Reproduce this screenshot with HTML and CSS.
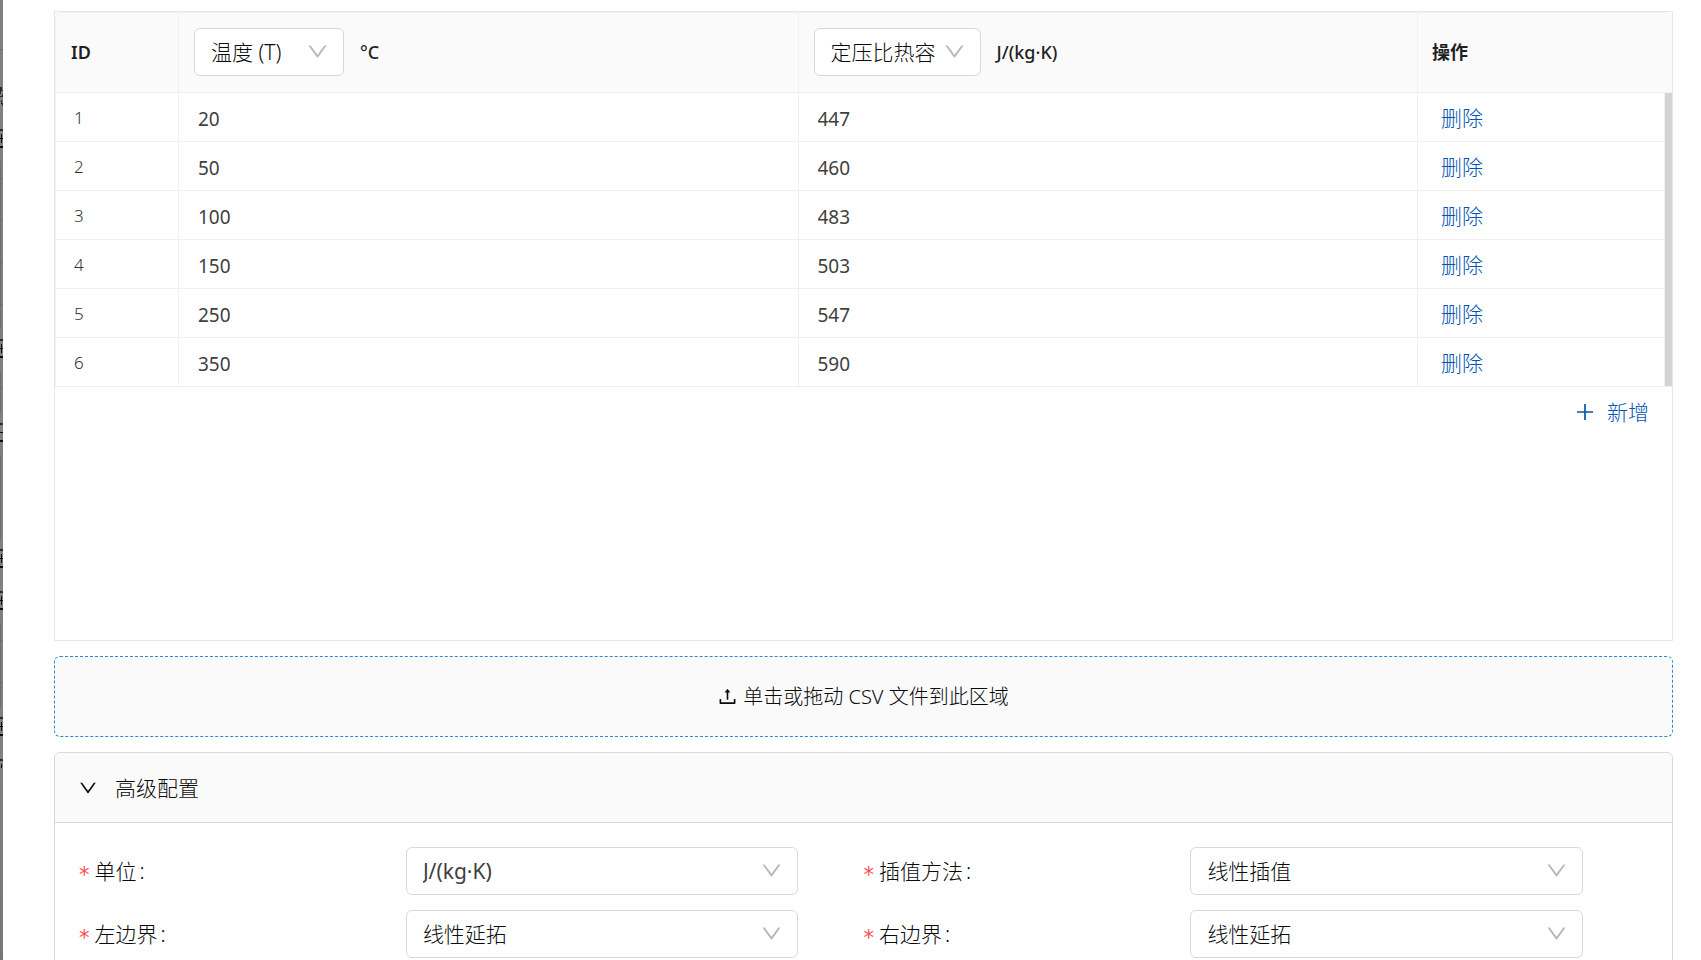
FILE: index.html
```
<!DOCTYPE html>
<html lang="zh-CN">
<head>
<meta charset="utf-8">
<title>定压比热容</title>
<link rel="stylesheet" href="styles.css">
</head>
<body>
<svg width="0" height="0" class="sprite" aria-hidden="true">
  <symbol id="down" viewBox="64 64 896 896"><path d="M884 256h-75c-5.100 0-9.900 2.500-12.900 6.600L512 654.200 227.900 262.600c-3-4.100-7.800-6.600-12.900-6.600h-75c-6.500 0-10.300 7.400-6.500 12.700l352.600 486.100c12.800 17.600 39 17.600 51.700 0l352.600-486.100c3.900-5.300.1-12.700-6.400-12.700z"/></symbol>
  <symbol id="plus" viewBox="64 64 896 896"><path d="M482 152h60q8 0 8 8v704q0 8-8 8h-60q-8 0-8-8V160q0-8 8-8Z"/><path d="M192 474h672q8 0 8 8v60q0 8-8 8H160q-8 0-8-8v-60q0-8 8-8Z"/></symbol>
  <symbol id="upload" viewBox="64 64 896 896"><path d="M400 317.700h73.900V656c0 4.400 3.600 8 8 8h60c4.400 0 8-3.600 8-8V317.700H624c6.700 0 10.400-7.700 6.300-12.900L518.300 163a8 8 0 00-12.600 0l-112 141.700c-4.100 5.300-.4 13 6.300 13zM878 626h-60c-4.400 0-8 3.600-8 8v154H214V634c0-4.400-3.600-8-8-8h-60c-4.400 0-8 3.600-8 8v198c0 17.700 14.300 32 32 32h684c17.700 0 32-14.300 32-32V634c0-4.400-3.600-8-8-8z"/></symbol>
</svg>

<div class="mask" aria-hidden="true">
  <svg width="3" height="960" viewBox="0 0 3 960" shape-rendering="crispEdges">
    <g fill="#6e6e6e">
      <path d="M0 49h3v1H0zM0 161h1v168H0zM1 178h2v1H1zM1 220h2v1H1zM1 262h2v1H1zM1 304h2v1H1zM0 371h1v42H0zM1 388h2v1H1zM0 455h1v84H0zM0 623h1v84H0zM1 640h2v1H1zM1 682h2v1H1z"/>
    </g>
    <g fill="#2c2c2e">
      <path d="M0 87h2v3H0zM0 90h3v1H0zM0 91h1v3H0zM2 94h1v3H2zM0 96h2v1H0zM1 100h1v4H1zM2 103h1v3H2z"/>
      <path d="M0 129h3v2H0zM0 339h3v2H0zM0 423h3v2H0zM0 549h3v2H0zM0 591h3v2H0zM0 717h3v2H0zM0 759h3v2H0z"/>
    </g>
    <g fill="#0c0c0e">
      <path d="M0 138h3v1H0zM1 134h1v9H1zM0 146h3v2H0z"/>
      <path d="M0 348h3v1H0zM1 344h1v9H1zM0 356h3v2H0z"/>
      <path d="M0 432h3v1H0zM0 440h3v2H0z"/>
      <path d="M0 558h3v1H0zM1 554h1v9H1zM0 566h3v2H0z"/>
      <path d="M0 600h3v1H0zM1 596h1v9H1zM0 608h3v2H0z"/>
      <path d="M0 726h3v1H0zM1 722h1v9H1zM0 734h3v2H0z"/>
      <path d="M1 764h1v4H1z"/>
    </g>
  </svg>
</div>

<main class="drawer">
  <section class="table-box">
    <div class="table-wrap">
      <table class="data">
        <colgroup><col class="col-id"><col><col><col class="col-action"></colgroup>
        <thead>
          <tr>
            <th scope="col">ID</th>
            <th scope="col">
              <div class="head-cell">
                <span class="select head-temp"><select aria-label="变量"><option>温度 (T)</option></select><svg class="arrow"><use href="#down"/></svg></span>
                <span>°C</span>
              </div>
            </th>
            <th scope="col">
              <div class="head-cell">
                <span class="select head-prop"><select aria-label="属性"><option>定压比热容</option></select><svg class="arrow"><use href="#down"/></svg></span>
                <span>J/(kg·K)</span>
              </div>
            </th>
            <th scope="col">操作</th>
          </tr>
        </thead>
        <tbody>
          <tr><td class="id">1</td><td><input aria-label="温度 1" value="20"></td><td><input aria-label="比热容 1" value="447"></td><td><button class="link" type="button">删除</button></td></tr>
          <tr><td class="id">2</td><td><input aria-label="温度 2" value="50"></td><td><input aria-label="比热容 2" value="460"></td><td><button class="link" type="button">删除</button></td></tr>
          <tr><td class="id">3</td><td><input aria-label="温度 3" value="100"></td><td><input aria-label="比热容 3" value="483"></td><td><button class="link" type="button">删除</button></td></tr>
          <tr><td class="id">4</td><td><input aria-label="温度 4" value="150"></td><td><input aria-label="比热容 4" value="503"></td><td><button class="link" type="button">删除</button></td></tr>
          <tr><td class="id">5</td><td><input aria-label="温度 5" value="250"></td><td><input aria-label="比热容 5" value="547"></td><td><button class="link" type="button">删除</button></td></tr>
          <tr><td class="id">6</td><td><input aria-label="温度 6" value="350"></td><td><input aria-label="比热容 6" value="590"></td><td><button class="link" type="button">删除</button></td></tr>
        </tbody>
      </table>
      <div class="scrollbar"></div>
    </div>
    <div class="add-row">
      <button class="link add" type="button"><svg class="icon"><use href="#plus"/></svg>新增</button>
    </div>
  </section>

  <button class="dropzone" type="button"><svg class="icon"><use href="#upload"/></svg><span>单击或拖动 CSV 文件到此区域</span></button>

  <section class="panel">
    <h2 class="panel-title"><button class="panel-toggle" type="button" aria-expanded="true"><svg class="icon"><use href="#down"/></svg>高级配置</button></h2>
    <form class="form">
      <div class="field">
        <label for="unit">单位</label>
        <span class="select unit"><select id="unit"><option>J/(kg·K)</option></select><svg class="arrow"><use href="#down"/></svg></span>
      </div>
      <div class="field">
        <label for="method">插值方法</label>
        <span class="select"><select id="method"><option>线性插值</option></select><svg class="arrow"><use href="#down"/></svg></span>
      </div>
      <div class="field">
        <label for="left">左边界</label>
        <span class="select"><select id="left"><option>线性延拓</option></select><svg class="arrow"><use href="#down"/></svg></span>
      </div>
      <div class="field">
        <label for="right">右边界</label>
        <span class="select"><select id="right"><option>线性延拓</option></select><svg class="arrow"><use href="#down"/></svg></span>
      </div>
    </form>
  </section>
</main>
</body>
</html>
```
FILE: styles.css
```
* {
  box-sizing: border-box;
}

body {
  display: flex;
  height: 100vh;
  margin: 0;
  overflow: hidden;
  background: #fff;
  color: #0a0a0a;
  font-family: "Noto Sans", "Noto Sans CJK SC", sans-serif;
  font-size: 21px;
  font-weight: 300;
  line-height: 32px;
}

button,
input,
select {
  margin: 0;
  border: 0;
  background: none;
  color: inherit;
  font: inherit;
}

.sprite {
  position: absolute;
}

.icon {
  flex: none;
  width: 20px;
  height: 20px;
  fill: currentColor;
}

.mask {
  flex: 0 0 3px;
  overflow: hidden;
  background: linear-gradient(#808080 80%, #77777a);
}

.mask svg {
  display: block;
}

.drawer {
  flex: 1;
  min-width: 0;
  padding: 11px 28px 0 51px;
}

/* Data table */
.table-box {
  min-height: 630px;
  border: 1px solid #e5e8eb;
}

.table-wrap {
  position: relative;
}

.data {
  width: 100%;
  table-layout: fixed;
  border-collapse: separate;
  border-spacing: 0;
  border: 1px solid #f0f0f0;
  border-width: 1px 0 0 1px;
  border-radius: 6px 6px 0 0;
}

.col-id {
  width: 123px;
}

.col-action {
  width: 254px;
}

.data th,
.data td {
  border: 1px solid #f0f0f0;
  border-width: 0 1px 1px 0;
}

.data th {
  height: 80px;
  padding: 0 15px 2px;
  background: #fafafa;
  color: #1f1f1f;
  font-size: 18px;
  font-weight: 600;
  text-align: left;
}

.data th:first-child {
  border-top-left-radius: 6px;
}

.data th:last-child {
  padding-left: 14px;
  border-right: 0;
  border-top-right-radius: 6px;
}

.data td {
  height: 49px;
  padding: 0 14px;
}

.data td.id {
  padding: 1px 18px 0;
  color: #333;
  font-size: 17px;
}

.data input {
  display: block;
  width: 100%;
  padding: 3px 5px 0;
  font-size: 19px;
  font-weight: 400;
  color: #404040;
}

.head-cell {
  display: flex;
  align-items: center;
  gap: 16px;
  font-weight: 500;
}

.head-temp {
  width: 150px;
}

.head-prop {
  width: 167px;
}

.scrollbar {
  position: absolute;
  top: 81px;
  right: 0;
  bottom: 1px;
  width: 8px;
  border-left: 1px solid #f0f0f0;
  background: #d3d3d3;
}

.link {
  padding: 2px 9px 0;
  color: #0055b3;
  cursor: pointer;
}

.add-row {
  display: flex;
  justify-content: flex-end;
  padding: 7px 14px;
}

.add {
  display: flex;
  align-items: center;
  gap: 12px;
}

/* Select box */
.select {
  position: relative;
  display: block;
}

.select select {
  display: block;
  width: 100%;
  height: 48px;
  padding: 0 16px;
  border: 1px solid #d9d9d9;
  border-radius: 6px;
  appearance: none;
  background: #fff;
  color: #0a0a0a;
  font-size: 21px;
  font-weight: 300;
}

.unit select {
  color: #404040;
  font-weight: 400;
}

.arrow {
  position: absolute;
  top: 13px;
  right: 16px;
  width: 21px;
  height: 21px;
  fill: #b8b8b8;
  pointer-events: none;
}

/* Upload area */
.dropzone {
  display: flex;
  align-items: center;
  justify-content: center;
  gap: 6px;
  width: 100%;
  height: 81px;
  margin: 15px 0;
  border: 1px dashed #2e86d1;
  border-radius: 6px;
  background: #fafafa;
  font-size: 20px;
}

.dropzone .icon {
  width: 19px;
  height: 19px;
}

/* Collapsible panel */
.panel {
  border: 1px solid #d9d9d9;
  border-radius: 6px;
}

.panel-title {
  margin: 0;
  font: inherit;
}

.panel-toggle {
  display: flex;
  align-items: center;
  gap: 18px;
  width: 100%;
  height: 70px;
  padding: 0 24px;
  border-bottom: 1px solid #d9d9d9;
  border-radius: 6px 6px 0 0;
  background: #fafafa;
}

.panel-toggle .icon {
  width: 18px;
  height: 18px;
}

.form {
  display: grid;
  grid-template-columns: 1fr 1fr;
  row-gap: 15px;
  padding: 24px;
}

.field {
  display: grid;
  grid-template-columns: 5fr 6fr 1fr;
  align-items: center;
}

.field label::before {
  content: "*";
  margin-right: 5px;
  color: #ff4d4f;
  font-family: "DejaVu Sans", sans-serif;
  font-weight: 400;
  line-height: 1;
  vertical-align: -3px;
}

.field label::after {
  content: ":";
  margin-left: 3px;
}
```
